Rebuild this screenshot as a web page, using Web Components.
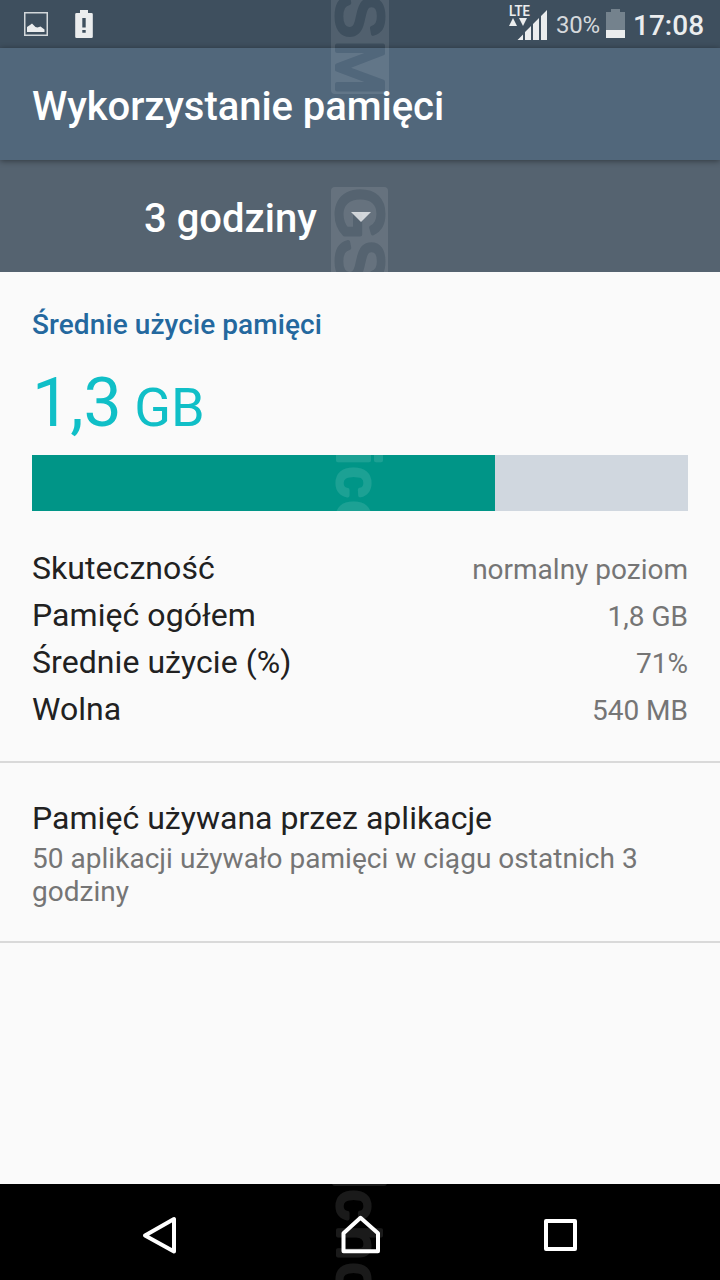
<!DOCTYPE html>
<html lang="pl"><head><meta charset="utf-8"><title>Wykorzystanie pamięci</title>
<style>html,body{margin:0;height:100%;overflow:hidden}body{font-family:Roboto,"Noto Sans",sans-serif;background:#fafafa}</style></head>
<body><memory-screen></memory-screen>
<script>
const define=(name,markup)=>{
  const t=document.createElement('template');t.innerHTML=markup;
  customElements.define(name,class extends HTMLElement{
    constructor(){super();this.attachShadow({mode:'open'}).append(t.content.cloneNode(true));}
  });
};
define('status-bar',`<style>
:host{display:flex;height:48px;background:#3e4f5e;color:#ebedee;align-items:flex-start}
svg{display:block;flex:none}.gap{flex:1}
.pct{font-size:24px;line-height:48px;width:50px;margin-left:6px;padding-top:1px;color:#d5d9dc;white-space:nowrap;letter-spacing:-.3px}
.time{font-size:28px;font-weight:500;line-height:48px;padding-top:2px;width:72px;margin-left:8px;margin-right:15px;white-space:nowrap}
</style>
<svg width="110" height="48"><path d="M24.75 12.75h22.5v22.5h-22.5z" fill="none" stroke="#d2d7da" stroke-width="1.5"/><path d="M27 32v-5l3-2 2-1.500 3.500 3.500 2 .5 3-1 4 3v2.500z" fill="#ebedee"/><path fill="#ebedee" fill-rule="evenodd" d="M80 10h8v3h3.500q1.300 0 1.300 1.300v22.400q0 1.300-1.300 1.300h-15q-1.300 0-1.300-1.300V14.300q0-1.300 1.300-1.300H80zM82.300 18v9.500h3.400V18zM82.300 30v2.800h3.400V30z"/></svg>
<div class="gap"></div>
<svg width="42" height="48" fill="#ebedee"><text x="1" y="16" font-size="14" font-weight="600" font-family="Roboto" textLength="21" lengthAdjust="spacingAndGlyphs">LTE</text><path d="M1 26l4-8 4 8zM11 18h8l-4 8zM9.500 40l5.500-5.500V40zM17 40v-8l6-6v14zM25 40V24l6-6v22zM33 40V16l6-6v30z"/></svg>
<div class="pct">30%</div>
<svg width="19" height="48"><path d="M5 9h9v3h5v18H0V12h5z" fill="#74828d"/><path d="M0 30h19v8H0z" fill="#ebedee"/></svg>
<div class="time">17:08</div>`.replace('<svg width="42" height="48" fill="#ebedee">','<svg width="42" height="48" viewBox="-1 0 42 48" fill="#ebedee" style="margin-right:1px">'));
define('app-header',`<style>
:host{display:block;height:112px;box-sizing:border-box;padding-left:32px;background:#51677b;color:#fff;font-size:40px;font-weight:500;line-height:118px;box-shadow:0 1px 6px rgba(0,0,0,.43);position:relative;white-space:nowrap;letter-spacing:-.05px}
</style><slot></slot>`);
define('period-picker',`<style>
:host{display:flex;height:112px;box-sizing:border-box;padding-left:144px;background:#556370;color:#fff;font-size:40px;font-weight:500;line-height:118px}
svg{margin:52px 0 0 34px;display:block}
</style><slot></slot><svg width="20" height="10"><path d="M0 0h20L10 10z" fill="#cfd3d7"/></svg>`);
define('usage-summary',`<style>
:host{display:block;padding:0 32px;height:261px;box-sizing:border-box}
h2{margin:0;padding-top:33px;height:66px;font-size:28px;font-weight:500;line-height:40px;color:#24689e;box-sizing:border-box;letter-spacing:.09px}
.amount{height:117px;color:#10bfc7;line-height:130px;white-space:nowrap;font-size:68px}
.amount small{font-size:54px;margin-left:-1px}
.bar{height:56px;background:#d0d7df}.fill{width:463px;height:56px;background:#009587}
</style><h2>Średnie użycie pamięci</h2><div class="amount">1,3<small> GB</small></div><div class="bar"><div class="fill"></div></div>`);
define('detail-row',`<style>
:host{display:flex;justify-content:space-between;height:47px;line-height:47px;font-size:32px;color:#212121;letter-spacing:.06px}
.value{font-size:28px;color:#757575;padding-top:1px;letter-spacing:0}
</style><span><slot></slot></span><span class="value"><slot name="value"></slot></span>`);
define('app-usage',`<style>
:host{display:block;height:180px;box-sizing:border-box;border-bottom:2px solid #d9d9d9;padding:35px 32px 0;letter-spacing:.03px}
.title{font-size:32px;line-height:40px;color:#212121;height:43px}
.sub{font-size:28px;line-height:33px;color:#757575;padding-top:1px}
</style><div class="title"><slot name="title"></slot></div><div class="sub"><slot></slot></div>`);
define('nav-bar',`<style>
:host{display:block;height:96px}svg{display:block}
</style><svg width="720" height="96" fill="none" stroke="#fff" stroke-width="4" stroke-linejoin="round"><path d="M145 51.500L174 35v32.500z"/><path d="M343.500 66.500V48.500l17-15.500L378 48.500v18z" transform="translate(0,.8)"/><path d="M546 37h29v28h-29z"/></svg>`);
define('brand-overlay',`<style>
:host{position:absolute;inset:0;pointer-events:none}svg{display:block}
text{font-family:"Liberation Sans",sans-serif;font-weight:400;font-size:66px;stroke-width:4px;stroke-linejoin:round}
.low text{font-size:60px;fill:#fff;stroke:#fff}.cut text{fill:#000;stroke:#000}
</style><svg width="720" height="1280">
<mask id="cut" maskUnits="userSpaceOnUse" x="0" y="0" width="720" height="1280"><rect width="720" height="1280" fill="#fff"/><g class="cut">
<text transform="translate(337,-6) rotate(90)">S</text><text transform="translate(337,40) rotate(90)">M</text>
<text transform="translate(337,188) rotate(90)">G</text><text transform="translate(337,239) rotate(90)">S</text></g></mask>
<clipPath id="pick"><path d="M0 160h720v112H0z"/></clipPath><clipPath id="bar"><path d="M32 455h463v56H32z"/></clipPath><clipPath id="nav"><path d="M0 1184h720v96H0z"/></clipPath>
<g fill="#fff" fill-opacity=".1"><rect x="331" y="-20" width="58" height="114" rx="4" mask="url(#cut)"/><g clip-path="url(#pick)"><rect x="331" y="187" width="57" height="180" rx="4" mask="url(#cut)"/></g></g>
<g clip-path="url(#bar)"><g class="low" opacity=".11"><text transform="translate(338,451) rotate(90)">i</text><text transform="translate(338,467) rotate(90)">c</text><text transform="translate(338,501) rotate(90)">e</text></g></g>
<g clip-path="url(#nav)"><g class="low" opacity=".1"><rect x="332" y="1160" width="55" height="26" rx="3" fill="#fff"/><text transform="translate(338,1190) rotate(90)">c</text><text transform="translate(338,1226) rotate(90)">h</text><text transform="translate(338,1263) rotate(90)">o</text></g></g>
</svg>`);
define('memory-screen',`<style>
:host{display:flex;flex-direction:column;position:relative;width:720px;height:1280px;background:#fafafa;overflow:hidden}
.details{padding:12px 32px 0;height:230px;box-sizing:border-box;border-bottom:2px solid #d9d9d9}
nav-bar{position:relative;z-index:2}
.navbg{background:#000;margin-top:auto}
</style>
<status-bar></status-bar><app-header>Wykorzystanie pamięci</app-header><period-picker>3 godziny</period-picker>
<usage-summary></usage-summary>
<div class="details"><detail-row>Skuteczność<span slot="value">normalny poziom</span></detail-row><detail-row>Pamięć ogółem<span slot="value">1,8 GB</span></detail-row><detail-row>Średnie użycie (%)<span slot="value">71%</span></detail-row><detail-row>Wolna<span slot="value">540 MB</span></detail-row></div>
<app-usage><span slot="title">Pamięć używana przez aplikacje</span>50 aplikacji używało pamięci w ciągu ostatnich 3 godziny</app-usage>
<div class="navbg"><nav-bar></nav-bar></div><brand-overlay></brand-overlay>`);
</script></body></html>
